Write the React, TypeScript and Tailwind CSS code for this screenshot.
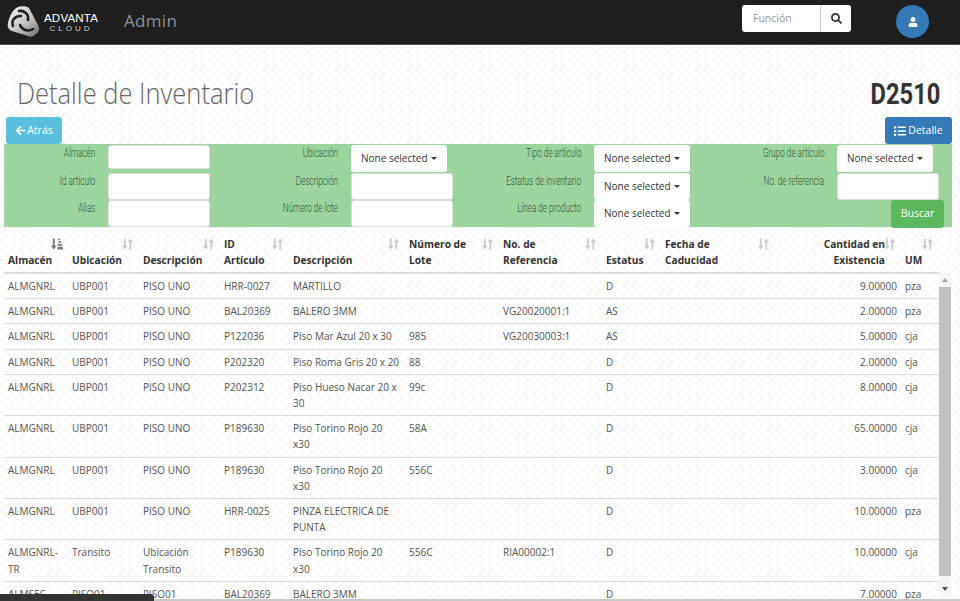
import React from 'react';
import { FaArrowLeft, FaList, FaSearch, FaUser } from 'react-icons/fa';

const columns = [
  { w: 64, lines: ['Almacén'] },
  { w: 71, lines: ['Ubicación'] },
  { w: 81, lines: ['Descripción'] },
  { w: 69, lines: ['ID', 'Artículo'] },
  { w: 116, lines: ['Descripción'] },
  { w: 94, lines: ['Número de', 'Lote'] },
  { w: 103, lines: ['No. de', 'Referencia'] },
  { w: 59, lines: ['Estatus'] },
  { w: 114, lines: ['Fecha de', 'Caducidad'] },
  { w: 126, lines: ['Cantidad en', 'Existencia'], right: true },
  { w: 38, lines: ['UM'] },
];

const rows = [
  ['ALMGNRL', 'UBP001', 'PISO UNO', 'HRR-0027', 'MARTILLO', '', '', 'D', '', '9.00000', 'pza'],
  ['ALMGNRL', 'UBP001', 'PISO UNO', 'BAL20369', 'BALERO 3MM', '', 'VG20020001:1', 'AS', '', '2.00000', 'pza'],
  ['ALMGNRL', 'UBP001', 'PISO UNO', 'P122036', 'Piso Mar Azul 20 x 30', '985', 'VG20030003:1', 'AS', '', '5.00000', 'cja'],
  ['ALMGNRL', 'UBP001', 'PISO UNO', 'P202320', 'Piso Roma Gris 20 x 20', '88', '', 'D', '', '2.00000', 'cja'],
  ['ALMGNRL', 'UBP001', 'PISO UNO', 'P202312', 'Piso Hueso Nacar 20 x 30', '99c', '', 'D', '', '8.00000', 'cja'],
  ['ALMGNRL', 'UBP001', 'PISO UNO', 'P189630', 'Piso Torino Rojo 20 x30', '58A', '', 'D', '', '65.00000', 'cja'],
  ['ALMGNRL', 'UBP001', 'PISO UNO', 'P189630', 'Piso Torino Rojo 20 x30', '556C', '', 'D', '', '3.00000', 'cja'],
  ['ALMGNRL', 'UBP001', 'PISO UNO', 'HRR-0025', 'PINZA ELECTRICA DE PUNTA', '', '', 'D', '', '10.00000', 'pza'],
  ['ALMGNRL-TR', 'Transito', 'Ubicación Transito', 'P189630', 'Piso Torino Rojo 20 x30', '556C', 'RIA00002:1', 'D', '', '10.00000', 'cja'],
  ['ALMSEC', 'PISO01', 'PISO01', 'BAL20369', 'BALERO 3MM', '', '', 'D', '', '7.00000', 'pza'],
];

const SortIcon = ({ active }: { active?: boolean }) => (
  <svg width="12" height="12" viewBox="0 0 13 12" className={active ? 'text-[#777]' : 'text-[#ccc]'} fill="currentColor">
    <path d="M2 0h2v8h2l-3 4-3-4h2z" />
    {active ? (
      <path d="M8 0h2v2H8zM8 3h3v2H8zM7 6h5v2H7zM7 9h6v3H7z" />
    ) : (
      <path d="M8 12h2V4h2L9 0 6 4h2z" />
    )}
  </svg>
);

const Logo = () => (
  <svg width="33" height="31" viewBox="0 0 33 31" fill="none">
    <defs>
      <linearGradient id="logoFill" x1="0" y1="0" x2="1" y2="1">
        <stop offset="0" stopColor="#f4f4f4" />
        <stop offset="0.55" stopColor="#c4c4c4" />
        <stop offset="1" stopColor="#6a6a6a" />
      </linearGradient>
    </defs>
    <path d="M11 1C15 0 20 0 22 2L31 19C33 23 32 26 29 28C26 31 24 31 21 30L5 25C2 24 0 21 1 17C2 11 6 3 11 1Z" fill="url(#logoFill)" />
    <g stroke="#1f1f1f" strokeWidth="2.6" strokeLinecap="round">
      <path d="M12 5C17 4 22 8 21 14" />
      <path d="M26 23C21 26 15 24 13 19" />
      <path d="M6 20C4 14 8 10 14 10" />
    </g>
  </svg>
);

const TextField = ({ short }: { short?: boolean }) => (
  <div className={`w-[102px] bg-white border border-[#ddd] rounded-[3px] ${short ? 'h-[24px]' : 'h-[27px]'}`} />
);

const SelectField = () => (
  <div className="h-[27px] w-[96px] bg-white rounded-[3px] flex items-center pl-[10px] gap-[3px] text-[10px] text-[#333]">
    <span className="whitespace-nowrap">None selected</span>
    <span className="border-x-[3px] border-x-transparent border-t-[3px] border-t-[#333]" />
  </div>
);

const FilterRow = ({ label, children }: { label?: string; children: React.ReactNode }) => (
  <div className="flex h-[27.5px]">
    <div className="w-[91px] mr-[13px] flex justify-end">
      <span className="origin-right scale-x-[0.68] text-[12px] leading-[17px] font-light text-[#3f5a42] whitespace-nowrap font-['Roboto',sans-serif]">
        {label}
      </span>
    </div>
    {children}
  </div>
);

export default function App() {
  return (
    <div className="relative w-[960px] h-[601px] overflow-hidden flex flex-col bg-[#fcfcfc] bg-[repeating-conic-gradient(#f9f9f9_0_25%,#fefefe_0_50%)] bg-[length:9px_9px] font-['Open_Sans',sans-serif] text-[#555]">
      <nav className="h-[45px] shrink-0 bg-[#1f1f1f] border-b border-[#555] flex items-start">
        <div className="ml-[7px] mt-[6px] flex">
          <Logo />
          <div className="ml-[4px] mt-[7px] text-white text-center font-['Liberation_Sans',sans-serif] leading-none">
            <div className="text-[11.5px] font-medium tracking-[0.2px] leading-[11px]">ADVANTA</div>
            <div className="text-[8px] tracking-[3px] text-[#ccc] leading-[9px]">CLOUD</div>
          </div>
        </div>
        <span className="ml-[26px] mt-[9px] text-[17px] leading-[24px] text-[#8a8f98] tracking-[0.3px]">Admin</span>
        <div className="ml-auto mt-[5px] flex h-[27px] w-[109px] mr-[45px] bg-white rounded-[3px] text-[10.5px] text-[#999]">
          <div className="w-[78px] pl-[11px] flex items-center">Función</div>
          <div className="flex-1 border-l border-[#ccc] flex items-center justify-center text-[#333]">
            <FaSearch size={11} />
          </div>
        </div>
        <div className="mt-[5px] w-[33px] h-[33px] mr-[31px] rounded-full bg-[#337ab7] flex items-center justify-center text-white">
          <FaUser size={10} />
        </div>
      </nav>

      <div className="flex items-center justify-between pl-[17px] pr-[20px] mt-[28px] h-[40px] shrink-0">
        <h1 className="origin-left scale-x-[0.88] text-[29px] font-light text-[#666] whitespace-nowrap">Detalle de Inventario</h1>
        <div className="origin-right scale-x-[0.79] text-[30px] font-bold text-[#333] font-['Roboto',sans-serif]">D2510</div>
      </div>

      <div className="flex justify-between pl-[6px] pr-[8px] mt-[4px] shrink-0">
        <button className="h-[27px] w-[56px] bg-[#5bc0de] text-white text-[10.5px] rounded-[3px] flex items-center justify-center gap-[1px]">
          <FaArrowLeft size={11} />
          Atrás
        </button>
        <button className="h-[27px] w-[67px] bg-[#337ab7] text-white text-[10.5px] rounded-[3px] flex items-center justify-center gap-[2px]">
          <FaList size={12} />
          Detalle
        </button>
      </div>

      <div className="mx-[4px] w-[948px] h-[83px] shrink-0 bg-[#9bd49c] pt-[1px] grid grid-cols-[243px_243px_243px_219px]">
        <div>
          <FilterRow label="Almacén"><TextField short /></FilterRow>
          <FilterRow label="Id artículo"><TextField /></FilterRow>
          <FilterRow label="Alias"><TextField /></FilterRow>
        </div>
        <div>
          <FilterRow label="Ubicación"><SelectField /></FilterRow>
          <FilterRow label="Descripción"><TextField /></FilterRow>
          <FilterRow label="Número de lote"><TextField /></FilterRow>
        </div>
        <div>
          <FilterRow label="Tipo de artículo"><SelectField /></FilterRow>
          <FilterRow label="Estatus de inventario"><SelectField /></FilterRow>
          <FilterRow label="Línea de producto"><SelectField /></FilterRow>
        </div>
        <div>
          <FilterRow label="Grupo de artículo"><SelectField /></FilterRow>
          <FilterRow label="No. de referencia"><TextField /></FilterRow>
          <div className="flex justify-end pr-[8px] h-[27.5px]">
            <button className="w-[53px] h-[28px] bg-[#5cb85c] text-white text-[10.5px] rounded-[3px]">Buscar</button>
          </div>
        </div>
      </div>

      <div className="flex-1 min-h-0 mx-[4px] flex">
        <div className="w-[935px] overflow-hidden">
          <table className="w-[935px] table-fixed border-collapse text-[10px] leading-[16.2px]">
            <colgroup>
              {columns.map((c, i) => (
                <col key={i} style={{ width: c.w }} />
              ))}
            </colgroup>
            <thead>
              <tr className="h-[46px] border-b-2 border-[#ddd]">
                {columns.map((c, i) => (
                  <th key={i} className={`relative align-bottom font-bold text-[#333] p-[4px] text-[10.2px] ${c.right ? 'text-right pr-[16px]' : 'text-left'}`}>
                    {c.lines.map((l) => (
                      <div key={l} className="whitespace-nowrap">{l}</div>
                    ))}
                    <span className="absolute right-[5px] top-[11px]">
                      <SortIcon active={i === 0} />
                    </span>
                  </th>
                ))}
              </tr>
            </thead>
            <tbody>
              {rows.map((r, i) => (
                <tr key={i} className="border-b border-[#ddd]">
                  {r.map((v, j) => (
                    <td key={j} className={`p-[4px] align-top text-[#555] ${j === 9 ? 'text-right' : ''}`}>{v}</td>
                  ))}
                </tr>
              ))}
            </tbody>
          </table>
        </div>
        <div className="mt-[46px] w-[12px] h-[322px] bg-[#f5f5f5] flex flex-col items-center shrink-0">
          <span className="mt-[5px] border-x-[3.5px] border-x-transparent border-b-[4px] border-b-[#a3a3a3]" />
          <div className="mt-[5px] w-full h-[289px] bg-[#c1c1c1]" />
          <span className="mt-[11px] border-x-[3.5px] border-x-transparent border-t-[4px] border-t-[#505050]" />
        </div>
      </div>

      <div className="absolute bottom-0 left-0 right-0 h-[2px] bg-[#c8c8c8]" />
      <div className="absolute bottom-0 left-0 w-[154px] h-[7px] bg-[#333] rounded-tr-[3px]" />
    </div>
  );
}
